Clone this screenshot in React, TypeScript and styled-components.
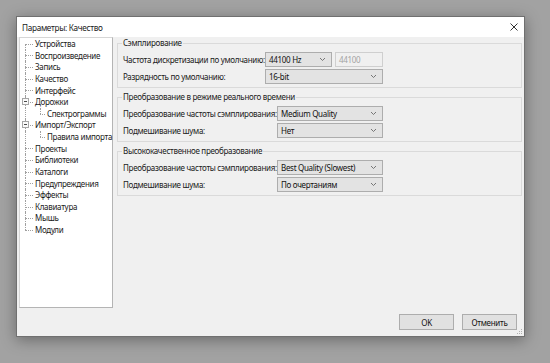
import React from 'react';
import styled, { createGlobalStyle } from 'styled-components';

type GuideKind = 'first' | 'tee' | 'end' | 'pass';

interface TreeItem {
  label: string;
  level: 0 | 1;
  kind: GuideKind;
  open?: boolean;
}

const treeItems: TreeItem[] = [
  { label: 'Устройства', level: 0, kind: 'first' },
  { label: 'Воспроизведение', level: 0, kind: 'tee' },
  { label: 'Запись', level: 0, kind: 'tee' },
  { label: 'Качество', level: 0, kind: 'tee' },
  { label: 'Интерфейс', level: 0, kind: 'tee' },
  { label: 'Дорожки', level: 0, kind: 'tee', open: true },
  { label: 'Спектрограммы', level: 1, kind: 'end' },
  { label: 'Импорт/Экспорт', level: 0, kind: 'tee', open: true },
  { label: 'Правила импорта', level: 1, kind: 'end' },
  { label: 'Проекты', level: 0, kind: 'tee' },
  { label: 'Библиотеки', level: 0, kind: 'tee' },
  { label: 'Каталоги', level: 0, kind: 'tee' },
  { label: 'Предупреждения', level: 0, kind: 'tee' },
  { label: 'Эффекты', level: 0, kind: 'tee' },
  { label: 'Клавиатура', level: 0, kind: 'tee' },
  { label: 'Мышь', level: 0, kind: 'tee' },
  { label: 'Модули', level: 0, kind: 'end' },
];

const GlobalStyle = createGlobalStyle`
  html, body {
    margin: 0;
    padding: 0;
  }
  body {
    width: 550px;
    height: 363px;
    overflow: hidden;
    background: #a2a2a2;
    font-family: 'Noto Sans', 'DejaVu Sans', sans-serif;
    font-size: 8px;
    letter-spacing: -0.3px;
    color: #111;
  }
`;

const Screen = styled.div`
  width: 550px;
  height: 363px;
  box-sizing: border-box;
  padding: 16px 0 0 16px;
`;

const Window = styled.div`
  position: relative;
  width: 509px;
  height: 321px;
  box-sizing: border-box;
  border: 1px solid #707070;
  background: #f0f0f0;
  box-shadow: 0 3px 14px rgba(0, 0, 0, 0.35);
  display: flex;
  flex-direction: column;
`;

const TitleBar = styled.div`
  height: 20px;
  flex: 0 0 auto;
  background: #fff;
  display: flex;
  align-items: center;
  justify-content: space-between;
  padding: 0 6px 0 5px;
`;

const Title = styled.span`
  color: #1a1a1a;
  font-size: 8.2px;
`;

const Main = styled.div`
  height: 271px;
  display: flex;
  gap: 4px;
  padding: 0 2px;
`;

const Tree = styled.div`
  width: 94px;
  box-sizing: border-box;
  border: 1px solid #b4b4b4;
  border-top-color: #d6d6d6;
  border-left-color: #d6d6d6;
  background: #fff;
  padding-left: 2px;
`;

const TreeRow = styled.div`
  height: 11.625px;
  line-height: 11.625px;
  display: flex;
  white-space: nowrap;
  color: #1a1a1a;
`;

const Guide = styled.span<{ $kind: GuideKind; $width: number; $x: number }>`
  position: relative;
  flex: 0 0 ${(p) => p.$width}px;
  &::before {
    content: '';
    position: absolute;
    left: ${(p) => p.$x}px;
    top: ${(p) => (p.$kind === 'first' ? '50%' : '0')};
    height: ${(p) => (p.$kind === 'first' || p.$kind === 'end' ? '50%' : '100%')};
    border-left: 1px dotted #a0a0a0;
  }
  &::after {
    content: '';
    display: ${(p) => (p.$kind === 'pass' ? 'none' : 'block')};
    position: absolute;
    left: ${(p) => p.$x}px;
    top: 50%;
    width: ${(p) => p.$width - p.$x - 2}px;
    border-top: 1px dotted #a0a0a0;
  }
`;

const Expander = styled.span`
  position: absolute;
  z-index: 2;
  left: 0;
  top: 2px;
  width: 7px;
  height: 7px;
  box-sizing: border-box;
  border: 1px solid #a6a6a6;
  background: #fafafa;
  &::after {
    content: '';
    position: absolute;
    left: 1px;
    right: 1px;
    top: 2px;
    border-top: 1px solid #4a4a4a;
  }
`;

const Panel = styled.div`
  flex: 1;
  display: flex;
  flex-direction: column;
`;

const Group = styled.fieldset`
  margin: 0;
  padding: 3px 5px 3px 5px;
  min-width: 0;
  border: 1px solid #dadada;
  & + & {
    margin-top: 3px;
  }
`;

const Legend = styled.legend`
  padding: 0 1px;
  margin-left: -1px;
  line-height: 12px;
  color: #1a1a1a;
`;

const Form = styled.div<{ $label: number; $field: number }>`
  display: grid;
  grid-template-columns: ${(p) => p.$label}px ${(p) => p.$field}px;
  grid-auto-rows: 15px;
  row-gap: 2px;
  align-items: center;
`;

const Label = styled.span`
  color: #1a1a1a;
  white-space: nowrap;
`;

const FieldPair = styled.div`
  display: flex;
  gap: 3px;
  height: 15px;
`;

const Select = styled.div<{ $width?: number }>`
  width: ${(p) => (p.$width ? `${p.$width}px` : '100%')};
  height: 15px;
  box-sizing: border-box;
  border: 1px solid #adadad;
  background: #e3e3e3;
  display: flex;
  align-items: center;
  justify-content: space-between;
  padding: 0 5px 0 3px;
  color: #111;
  white-space: nowrap;
`;

const TextBox = styled.div`
  flex: 1;
  height: 15px;
  box-sizing: border-box;
  border: 1px solid #cfcfcf;
  background: #f0f0f0;
  color: #a3a3a3;
  display: flex;
  align-items: center;
  padding-left: 3px;
`;

const Footer = styled.div`
  flex: 1;
  display: flex;
  justify-content: flex-end;
  align-items: flex-start;
  gap: 8px;
  padding: 6px 7px 0 0;
`;

const Button = styled.button`
  width: 55px;
  height: 16px;
  padding: 0;
  border: 1px solid #adadad;
  background: #e1e1e1;
  font: inherit;
  letter-spacing: inherit;
  color: #111;
`;

const Grip = styled.svg`
  position: absolute;
  right: 1px;
  bottom: 1px;
`;

const Chevron = () => (
  <svg width="7" height="5" viewBox="0 0 7 5">
    <path d="M1 1 L3.5 3.5 L6 1" fill="none" stroke="#6a6a6a" strokeWidth="0.9" />
  </svg>
);

const CloseIcon = () => (
  <svg width="8" height="8" viewBox="0 0 8 8">
    <path d="M0.5 0.5 L7.5 7.5 M7.5 0.5 L0.5 7.5" stroke="#333" strokeWidth="1" />
  </svg>
);

const Dropdown: React.FC<{ value: string; width?: number }> = ({ value, width }) => (
  <Select $width={width}>
    <span>{value}</span>
    <Chevron />
  </Select>
);

const App: React.FC = () => {
  return (
    <Screen>
      <GlobalStyle />
      <Window>
        <TitleBar>
          <Title>Параметры: Качество</Title>
          <CloseIcon />
        </TitleBar>
        <Main>
          <Tree>
            {treeItems.map((item) => (
              <TreeRow key={item.label}>
                {item.level === 0 ? (
                  <Guide $kind={item.kind} $width={13} $x={3}>
                    {item.open && <Expander />}
                  </Guide>
                ) : (
                  <>
                    <Guide $kind="pass" $width={13} $x={3} />
                    <Guide $kind={item.kind} $width={12} $x={5} />
                  </>
                )}
                <span>{item.label}</span>
              </TreeRow>
            ))}
          </Tree>
          <Panel>
            <Group>
              <Legend>Сэмплирование</Legend>
              <Form $label={142} $field={118}>
                <Label>Частота дискретизации по умолчанию:</Label>
                <FieldPair>
                  <Dropdown value="44100 Hz" width={67} />
                  <TextBox>44100</TextBox>
                </FieldPair>
                <Label>Разрядность по умолчанию:</Label>
                <Dropdown value="16-bit" />
              </Form>
            </Group>
            <Group>
              <Legend>Преобразование в режиме реального времени</Legend>
              <Form $label={154} $field={106}>
                <Label>Преобразование частоты сэмплирования:</Label>
                <Dropdown value="Medium Quality" />
                <Label>Подмешивание шума:</Label>
                <Dropdown value="Нет" />
              </Form>
            </Group>
            <Group>
              <Legend>Высококачественное преобразование</Legend>
              <Form $label={154} $field={106}>
                <Label>Преобразование частоты сэмплирования:</Label>
                <Dropdown value="Best Quality (Slowest)" />
                <Label>Подмешивание шума:</Label>
                <Dropdown value="По очертаниям" />
              </Form>
            </Group>
          </Panel>
        </Main>
        <Footer>
          <Button>OK</Button>
          <Button>Отменить</Button>
        </Footer>
        <Grip width="6" height="6" viewBox="0 0 6 6">
          <rect x="4" y="0" width="1" height="1" fill="#b0b0b0" />
          <rect x="2" y="2" width="1" height="1" fill="#b0b0b0" />
          <rect x="4" y="2" width="1" height="1" fill="#b0b0b0" />
          <rect x="0" y="4" width="1" height="1" fill="#b0b0b0" />
          <rect x="2" y="4" width="1" height="1" fill="#b0b0b0" />
          <rect x="4" y="4" width="1" height="1" fill="#b0b0b0" />
        </Grip>
      </Window>
    </Screen>
  );
};

export default App;
